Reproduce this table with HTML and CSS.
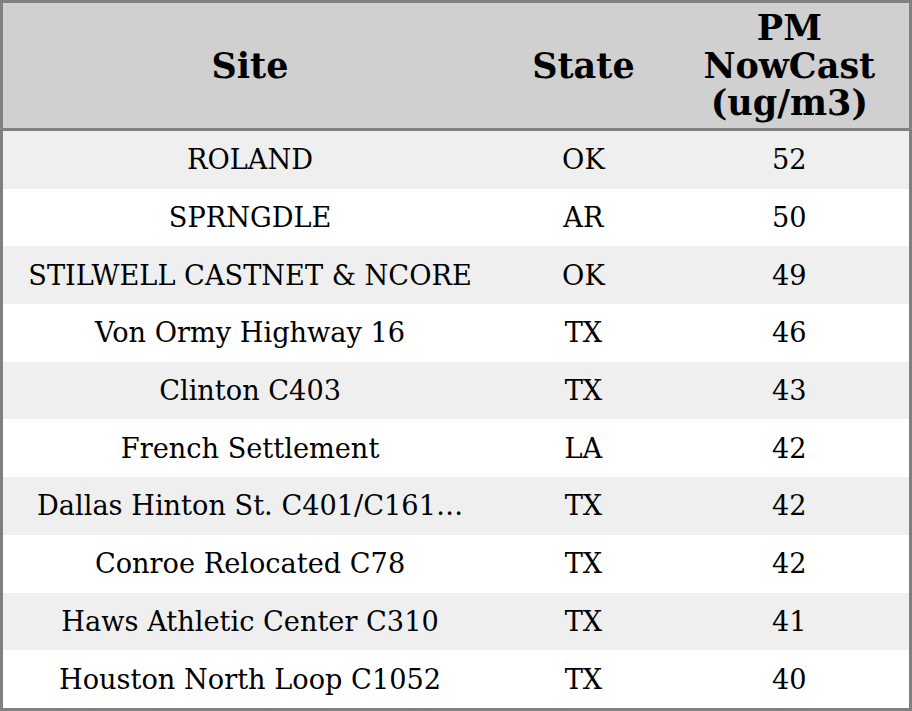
FILE: index.html
```html
<!DOCTYPE html>
<html>
<head>
<meta charset="utf-8">
<link rel="stylesheet" href="styles.css">
</head>
<body>
<table class="grid">
  <colgroup>
    <col class="c-site">
    <col class="c-state">
    <col class="c-pm">
  </colgroup>
  <thead>
    <tr>
      <th>Site</th>
      <th>State</th>
      <th>PM<br>NowCast<br>(ug/m3)</th>
    </tr>
  </thead>
  <tbody>
    <tr><td>ROLAND</td><td>OK</td><td>52</td></tr>
    <tr><td>SPRNGDLE</td><td>AR</td><td>50</td></tr>
    <tr><td>STILWELL CASTNET &amp; NCORE</td><td>OK</td><td>49</td></tr>
    <tr><td>Von Ormy Highway 16</td><td>TX</td><td>46</td></tr>
    <tr><td>Clinton C403</td><td>TX</td><td>43</td></tr>
    <tr><td>French Settlement</td><td>LA</td><td>42</td></tr>
    <tr><td>Dallas Hinton St. C401/C161…</td><td>TX</td><td>42</td></tr>
    <tr><td>Conroe Relocated C78</td><td>TX</td><td>42</td></tr>
    <tr><td>Haws Athletic Center C310</td><td>TX</td><td>41</td></tr>
    <tr><td>Houston North Loop C1052</td><td>TX</td><td>40</td></tr>
  </tbody>
</table>
</body>
</html>
```
FILE: styles.css
```css
html, body {
  margin: 0;
  padding: 0;
  background: #ffffff;
}
.grid {
  width: 912px;
  height: 711px;
  border-collapse: collapse;
  border: 3px solid #808080;
  table-layout: fixed;
  font-family: "DejaVu Serif", serif;
  color: #000;
}
.c-site { width: 494px; }
.c-state { width: 172px; }
.c-pm { width: 240px; }
.grid th {
  background: #d0d0d0;
  font-size: 35px;
  font-weight: bold;
  line-height: 37.5px;
  height: 125px;
  padding: 0;
  border-bottom: 3px solid #808080;
  text-align: center;
  vertical-align: middle;
}
.grid td {
  font-size: 27.2px;
  line-height: 31px;
  height: 57.7px;
  padding: 0;
  text-align: center;
  vertical-align: middle;
  white-space: nowrap;
}
.grid tbody tr:nth-child(odd) td {
  background: #efefef;
}
```
